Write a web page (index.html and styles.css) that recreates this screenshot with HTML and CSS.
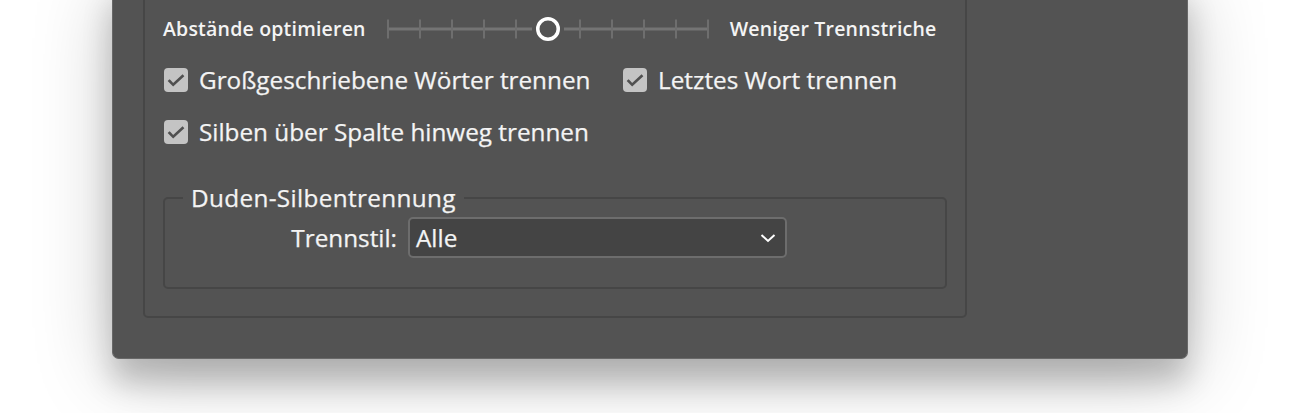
FILE: index.html
```html
<!DOCTYPE html>
<html lang="de">
<head>
<meta charset="utf-8">
<title>Silbentrennung</title>
<link rel="stylesheet" href="styles.css">
</head>
<body>
<div class="dialog">
  <div class="group">
    <div class="slider-row">
      <span class="slider-label">Abstände optimieren</span>
      <svg class="slider" width="324" height="30" viewBox="0 0 324 30">
        <g stroke="#747474" stroke-width="3">
          <line x1="2" y1="15" x2="146" y2="15"/>
          <line x1="178" y1="15" x2="322" y2="15"/>
        </g>
        <g stroke="#6e6e6e" stroke-width="2">
          <line x1="2" y1="5.5" x2="2" y2="24.5"/>
          <line x1="34" y1="5.5" x2="34" y2="24.5"/>
          <line x1="66" y1="5.5" x2="66" y2="24.5"/>
          <line x1="98" y1="5.5" x2="98" y2="24.5"/>
          <line x1="130" y1="5.5" x2="130" y2="24.5"/>
          <line x1="194" y1="5.5" x2="194" y2="24.5"/>
          <line x1="226" y1="5.5" x2="226" y2="24.5"/>
          <line x1="258" y1="5.5" x2="258" y2="24.5"/>
          <line x1="290" y1="5.5" x2="290" y2="24.5"/>
          <line x1="322" y1="5.5" x2="322" y2="24.5"/>
        </g>
        <circle cx="162" cy="15" r="10.25" fill="#535353" stroke="#ffffff" stroke-width="3.5"/>
      </svg>
      <span class="slider-label">Weniger Trennstriche</span>
    </div>

    <div class="check-row">
      <label class="check check-wide">
        <svg class="box" width="24" height="24" viewBox="0 0 24 24"><rect x="0" y="0" width="24" height="24" rx="4" fill="#c4c4c4"/><path d="M5.5 13 L9.2 16.8 L18.5 8.2" fill="none" stroke="#505050" stroke-width="2.6" stroke-linecap="square"/></svg>
        <span>Großgeschriebene Wörter trennen</span>
      </label>
      <label class="check">
        <svg class="box" width="24" height="24" viewBox="0 0 24 24"><rect x="0" y="0" width="24" height="24" rx="4" fill="#c4c4c4"/><path d="M5.5 13 L9.2 16.8 L18.5 8.2" fill="none" stroke="#505050" stroke-width="2.6" stroke-linecap="square"/></svg>
        <span>Letztes Wort trennen</span>
      </label>
    </div>

    <div class="check-row">
      <label class="check">
        <svg class="box" width="24" height="24" viewBox="0 0 24 24"><rect x="0" y="0" width="24" height="24" rx="4" fill="#c4c4c4"/><path d="M5.5 13 L9.2 16.8 L18.5 8.2" fill="none" stroke="#505050" stroke-width="2.6" stroke-linecap="square"/></svg>
        <span>Silben über Spalte hinweg trennen</span>
      </label>
    </div>

    <fieldset class="duden">
      <legend>Duden-Silbentrennung</legend>
      <div class="field-row">
        <span class="field-label">Trennstil:</span>
        <div class="select">
          <span>Alle</span>
          <svg class="chev" width="16" height="10" viewBox="0 0 16 10"><path d="M1.5 2 L8 8 L14.5 2" fill="none" stroke="#ffffff" stroke-width="2"/></svg>
        </div>
      </div>
    </fieldset>
  </div>
</div>
</body>
</html>
```
FILE: styles.css
```css
html, body {
  margin: 0;
  padding: 0;
}
body {
  background: #ffffff;
  height: 413px;
  overflow: hidden;
  font-family: "Open Sans", "Noto Sans", sans-serif;
  color: #f4f4f4;
}
.dialog {
  margin: -20px 0 0 112px;
  box-sizing: border-box;
  width: 1076px;
  padding: 0 0 40px 30px;
  background: #535353;
  border: 1px solid #686868;
  border-top: none;
  border-radius: 0 0 7px 7px;
  box-shadow: 0 24px 30px rgba(0, 0, 0, 0.2), 0 14px 80px rgba(0, 0, 0, 0.22);
}
.group {
  width: 824px;
  box-sizing: border-box;
  border: 2px solid #464646;
  border-radius: 0 0 5px 5px;
  padding: 32px 0 27px 18px;
}
.slider-row {
  display: flex;
  align-items: center;
  height: 30px;
  gap: 20px;
}
.slider-label {
  font-size: 19.5px;
  font-weight: 600;
  line-height: 30px;
  white-space: nowrap;
  letter-spacing: 0.2px;
}
.slider {
  display: block;
  flex: none;
}
.check-row {
  display: flex;
  align-items: center;
  height: 32px;
  margin-top: 20px;
}
.check {
  display: flex;
  align-items: center;
  gap: 11px;
  font-size: 24.3px;
  line-height: 32px;
  white-space: nowrap;
  padding-left: 1px;
  -webkit-text-stroke: 0.25px currentColor;
}
.check-wide {
  width: 458px;
}
.box {
  display: block;
  flex: none;
}
.duden {
  margin: 36px 0 0 0;
  width: 784px;
  box-sizing: border-box;
  border: 2px solid #464646;
  border-radius: 5px;
  padding: 0 18px 29px 18px;
}
.duden legend {
  padding: 0 8px;
  font-size: 24.3px;
  line-height: 28px;
  letter-spacing: 0.35px;
  -webkit-text-stroke: 0.25px currentColor;
}
.field-row {
  display: flex;
  align-items: center;
  margin-top: 5px;
  gap: 11px;
}
.field-label {
  width: 214px;
  text-align: right;
  font-size: 24.3px;
  line-height: 32px;
  -webkit-text-stroke: 0.25px currentColor;
}
.select {
  width: 379px;
  height: 41px;
  box-sizing: border-box;
  border: 2px solid #6d6d6d;
  border-radius: 5px;
  background: #444444;
  display: flex;
  align-items: center;
  justify-content: space-between;
  padding: 0 9px 0 6px;
  font-size: 24.3px;
  line-height: 32px;
  -webkit-text-stroke: 0.25px currentColor;
}
.chev {
  display: block;
}
```
